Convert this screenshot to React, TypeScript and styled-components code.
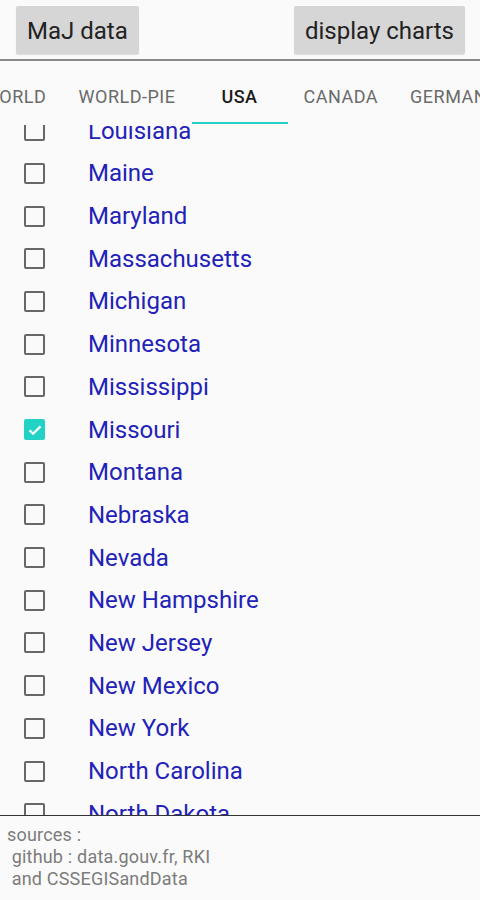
import React, { useLayoutEffect, useRef, useState } from "react";
import styled, { createGlobalStyle } from "styled-components";

const GlobalStyle = createGlobalStyle`
  html, body {
    margin: 0;
    padding: 0;
    background: #fafafa;
  }
  body {
    font-family: Roboto, "Liberation Sans", sans-serif;
  }
`;

const ROW_H = 42.7;
const FIRST_VISIBLE = "Louisiana";
const ROW_CLIP = 15;

const STATES = [
  "Alabama", "Alaska", "Arizona", "Arkansas", "California", "Colorado",
  "Connecticut", "Delaware", "District of Columbia", "Florida", "Georgia",
  "Hawaii", "Idaho", "Illinois", "Indiana", "Iowa", "Kansas", "Kentucky",
  "Louisiana", "Maine", "Maryland", "Massachusetts", "Michigan", "Minnesota",
  "Mississippi", "Missouri", "Montana", "Nebraska", "Nevada", "New Hampshire",
  "New Jersey", "New Mexico", "New York", "North Carolina", "North Dakota",
  "Ohio", "Oklahoma", "Oregon", "Pennsylvania", "Rhode Island",
  "South Carolina", "South Dakota", "Tennessee", "Texas", "Utah", "Vermont",
  "Virginia", "Washington", "West Virginia", "Wisconsin", "Wyoming",
];

const TABS = ["FRANCE", "WORLD", "WORLD-PIE", "USA", "CANADA", "GERMANY"];

const Screen = styled.div`
  width: 480px;
  height: 900px;
  display: flex;
  flex-direction: column;
  overflow: hidden;
`;

const Toolbar = styled.div`
  height: 61px;
  flex-shrink: 0;
  display: flex;
  justify-content: space-between;
  align-items: flex-start;
  padding: 6px 15px 0 16px;
  box-sizing: border-box;
  border-bottom: 2px solid #8a8a8a;
`;

const ActionButton = styled.button`
  height: 48px;
  padding: 2px 11px 0;
  border: none;
  border-radius: 2px;
  background: #d6d6d6;
  box-shadow: 0 1px 1px rgba(0, 0, 0, 0.12);
  color: #222;
  font-family: Roboto, "Liberation Sans", sans-serif;
  font-size: 24px;
  cursor: pointer;
`;

const TabBar = styled.div`
  position: relative;
  height: 64px;
  flex-shrink: 0;
  display: flex;
  overflow: hidden;
  z-index: 2;
`;

const Tab = styled.div<{ $active: boolean }>`
  position: relative;
  flex-shrink: 0;
  min-width: 96px;
  padding: 6px 16px 0;
  box-sizing: border-box;
  display: flex;
  align-items: center;
  justify-content: center;
  font-size: 18px;
  font-weight: ${(p) => (p.$active ? 500 : 400)};
  letter-spacing: 0.5px;
  color: ${(p) => (p.$active ? "#1b1b1b" : "#6a6a6a")};
  &::after {
    content: "";
    display: ${(p) => (p.$active ? "block" : "none")};
    position: absolute;
    left: 0;
    right: 0;
    bottom: 1px;
    height: 2px;
    background: #22d3c5;
  }
`;

const List = styled.div`
  flex: 1;
  overflow: hidden;
`;

const Row = styled.label`
  height: ${ROW_H}px;
  display: flex;
  align-items: center;
  padding-left: 24px;
  gap: 44px;
`;

const Box = styled.span<{ $checked: boolean }>`
  width: 21px;
  height: 21px;
  box-sizing: border-box;
  border-radius: 2px;
  border: 2px solid ${(p) => (p.$checked ? "#22d3c5" : "#676767")};
  background: ${(p) => (p.$checked ? "#22d3c5" : "transparent")};
  display: flex;
  align-items: center;
  justify-content: center;
  flex-shrink: 0;
`;

const Name = styled.span`
  font-size: 24px;
  color: #2222b8;
  margin-left: -1px;
`;

const Footer = styled.div`
  height: 85px;
  flex-shrink: 0;
  border-top: 1px solid #333;
  padding: 8px 0 0 7px;
  box-sizing: border-box;
  font-size: 18px;
  letter-spacing: 0.2px;
  line-height: 22px;
  color: #7c7c7c;
  white-space: pre;
`;

export default function App() {
  const [checked] = useState<string[]>(["Missouri"]);
  const listRef = useRef<HTMLDivElement>(null);
  const tabRef = useRef<HTMLDivElement>(null);

  useLayoutEffect(() => {
    if (listRef.current) {
      const idx = STATES.indexOf(FIRST_VISIBLE);
      listRef.current.scrollTop = Math.round(idx * ROW_H + ROW_CLIP);
    }
    if (tabRef.current) {
      const usa = tabRef.current.children[3] as HTMLElement;
      tabRef.current.scrollLeft = usa.offsetLeft - 192;
    }
  }, []);

  return (
    <Screen>
      <GlobalStyle />
      <Toolbar>
        <ActionButton>MaJ data</ActionButton>
        <ActionButton>display charts</ActionButton>
      </Toolbar>
      <TabBar ref={tabRef}>
        {TABS.map((t) => (
          <Tab key={t} $active={t === "USA"}>
            {t}
          </Tab>
        ))}
      </TabBar>
      <List ref={listRef}>
        {STATES.map((s) => {
          const on = checked.includes(s);
          return (
            <Row key={s}>
              <Box $checked={on}>
                {on && (
                  <svg width="16" height="16" viewBox="0 0 16 16">
                    <path d="M2.5 8.2l3.6 3.6L13.5 4.4" fill="none" stroke="#fff" strokeWidth="2.2" />
                  </svg>
                )}
              </Box>
              <Name>{s}</Name>
            </Row>
          );
        })}
      </List>
      <Footer>{"sources :\n github : data.gouv.fr, RKI\n and CSSEGISandData"}</Footer>
    </Screen>
  );
}
